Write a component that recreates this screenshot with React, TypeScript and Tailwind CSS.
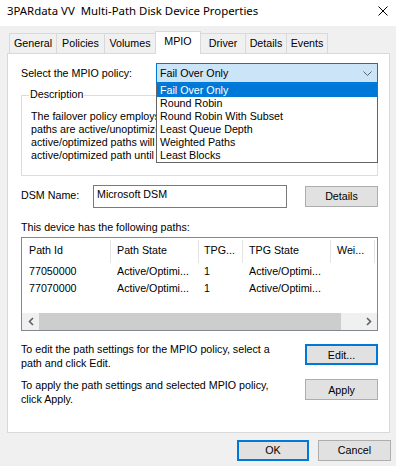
import React from "react";

function Tab({ label, w, selected, first }: { label: string; w: string; selected?: boolean; first?: boolean }) {
  return (
    <div
      className={
        (first ? "" : "-ml-px ") +
        (selected
          ? "relative z-10 h-[23px] -mb-px bg-white border-t border-l border-r border-[#d9d9d9] flex items-center justify-center pb-[3px] "
          : "h-[20px] bg-[#f0f0f0] border-t border-l border-r border-[#d9d9d9] flex items-center justify-center ") +
        w
      }
    >
      {label}
    </div>
  );
}

function Chevron({ dir }: { dir: "left" | "right" }) {
  return (
    <svg width="6" height="9" viewBox="0 0 6 9">
      {dir === "left" ? (
        <polyline points="5,1 1.5,4.5 5,8" fill="none" stroke="#606060" strokeWidth="1.6" />
      ) : (
        <polyline points="1,1 4.5,4.5 1,8" fill="none" stroke="#606060" strokeWidth="1.6" />
      )}
    </svg>
  );
}

export default function App() {
  const items = ["Fail Over Only", "Round Robin", "Round Robin With Subset", "Least Queue Depth", "Weighted Paths", "Least Blocks"];
  return (
    <div className="w-[396px] h-[466px] bg-[#f0f0f0] text-black flex flex-col overflow-hidden font-['Liberation_Sans',Arial,sans-serif] text-[10.7px] leading-[13px]">
      {/* Title bar */}
      <div className="h-[26px] bg-white flex justify-between items-start pt-[3px] pl-[7px] pr-[8px]">
        <span className="whitespace-pre font-['Noto_Sans',sans-serif] text-[11.4px] leading-[16px] text-black">
          {"3PARdata VV  Multi-Path Disk Device Properties"}
        </span>
        <svg width="10" height="10" viewBox="0 0 10 10" className="mt-[3px]">
          <line x1="0.5" y1="0.5" x2="9.5" y2="9.5" stroke="#000" strokeWidth="1" />
          <line x1="9.5" y1="0.5" x2="0.5" y2="9.5" stroke="#000" strokeWidth="1" />
        </svg>
      </div>

      {/* Tabs */}
      <div className="mt-[5px] h-[22px] flex items-end pl-[9px]">
        <Tab label="General" w="w-[48px]" first />
        <Tab label="Policies" w="w-[49px]" />
        <Tab label="Volumes" w="w-[52px]" />
        <Tab label="MPIO" w="w-[46px]" selected />
        <Tab label="Driver" w="w-[46px]" />
        <Tab label="Details" w="w-[42px]" />
        <Tab label="Events" w="w-[42px]" />
      </div>

      {/* Panel */}
      <div className="ml-[7px] w-[383px] h-[380px] border border-[#d9d9d9] bg-white flex flex-col pt-[9px] pl-[13px] pr-[11px]">
        {/* Policy row */}
        <div className="flex items-center h-[20px]">
          <div className="w-[135px]">Select the MPIO policy:</div>
          <div className="relative w-[222px] h-[20px] border border-[#0078d7] bg-[#cce4f7] flex items-center justify-between pl-[3px] pr-[5px]">
            <span>Fail Over Only</span>
            <svg width="9" height="5" viewBox="0 0 9 5">
              <polyline points="0.5,0.5 4.5,4.5 8.5,0.5" fill="none" stroke="#606060" strokeWidth="1" />
            </svg>
            <div className="absolute left-[-1px] top-[19px] w-[222px] h-[80px] border border-[#646464] bg-white z-20 flex flex-col">
              {items.map((it, i) => (
                <div
                  key={it}
                  className={
                    "h-[13px] leading-[13px] pl-[3px] whitespace-nowrap " +
                    (i === 0 ? "bg-[#0078d7] text-white" : "text-black")
                  }
                >
                  {it}
                </div>
              ))}
            </div>
          </div>
        </div>

        {/* Description group */}
        <div className="relative mt-[12px] h-[81px] border border-[#dcdcdc]">
          <span className="absolute -top-[8px] left-[7px] bg-white px-[1px] leading-[13px]">Description</span>
          <div className="mt-[14px] ml-[9px] w-[125px] overflow-hidden whitespace-nowrap">
            <div>The failover policy employs one active/optimized path and all other</div>
            <div>paths are active/unoptimized, standby, or unavailable. The non-</div>
            <div>active/optimized paths will be tried round-robin upon failure of the</div>
            <div>active/optimized path until an available path is found.</div>
          </div>
        </div>

        {/* DSM row */}
        <div className="mt-[9px] flex items-center h-[23px]">
          <div className="w-[72px] -mt-[2px]">DSM Name:</div>
          <div className="w-[194px] h-[23px] border border-[#7a7a7a] pl-[3px] pt-[2px]">Microsoft DSM</div>
          <div className="ml-auto w-[73px] h-[21px] border border-[#adadad] bg-[#e1e1e1] flex items-center justify-center">
            Details
          </div>
        </div>

        <div className="mt-[13px]">This device has the following paths:</div>

        {/* List view */}
        <div className="mt-[3px] h-[94px] border border-[#828790] flex flex-col">
          <div className="h-[25px] flex shrink-0">
            <div className="w-[88px] pl-[7px] flex items-center">Path Id</div>
            <div className="w-px h-[23px] mt-[2px] bg-[#e5e5e5]" />
            <div className="w-[87px] pl-[6px] flex items-center">Path State</div>
            <div className="w-px h-[23px] mt-[2px] bg-[#e5e5e5]" />
            <div className="w-[43px] pl-[5px] flex items-center">TPG...</div>
            <div className="w-px h-[23px] mt-[2px] bg-[#e5e5e5]" />
            <div className="w-[87px] pl-[6px] flex items-center">TPG State</div>
            <div className="w-px h-[23px] mt-[2px] bg-[#e5e5e5]" />
            <div className="w-[43px] pl-[6px] flex items-center">Wei...</div>
            <div className="w-px h-[23px] mt-[2px] bg-[#e5e5e5]" />
          </div>
          {["77050000", "77070000"].map((id) => (
            <div key={id} className="h-[17px] flex items-center shrink-0">
              <div className="w-[89px] pl-[7px]">{id}</div>
              <div className="w-[88px] pl-[6px]">Active/Optimi...</div>
              <div className="w-[44px] pl-[5px]">1</div>
              <div className="w-[88px] pl-[6px]">Active/Optimi...</div>
            </div>
          ))}
          <div className="mt-auto h-[17px] flex bg-[#f0f0f0]">
            <div className="w-[17px] flex items-center justify-center">
              <Chevron dir="left" />
            </div>
            <div className="w-[302px] bg-[#cdcdcd]" />
            <div className="flex-1" />
            <div className="w-[17px] flex items-center justify-center">
              <Chevron dir="right" />
            </div>
          </div>
        </div>

        {/* Edit row */}
        <div className="mt-[11px] flex justify-between items-start leading-[14px]">
          <div className="whitespace-nowrap">
            To edit the path settings for the MPIO policy, select a<br />
            path and click Edit.
          </div>
          <div className="mt-[2px] w-[73px] h-[21px] border-2 border-[#0078d7] bg-[#e1e1e1] flex items-center justify-center">
            Edit...
          </div>
        </div>

        {/* Apply row */}
        <div className="mt-[8px] flex justify-between items-start leading-[14px]">
          <div className="whitespace-nowrap">
            To apply the path settings and selected MPIO policy,<br />
            click Apply.
          </div>
          <div className="mt-[1px] w-[73px] h-[21px] border border-[#adadad] bg-[#e1e1e1] flex items-center justify-center">
            Apply
          </div>
        </div>
      </div>

      {/* Bottom buttons */}
      <div className="mt-[7px] flex justify-end gap-[9px] pr-[5px]">
        <div className="w-[72px] h-[21px] border-2 border-[#0078d7] bg-[#e1e1e1] flex items-center justify-center">OK</div>
        <div className="w-[73px] h-[21px] border border-[#adadad] bg-[#e1e1e1] flex items-center justify-center">Cancel</div>
      </div>
    </div>
  );
}
